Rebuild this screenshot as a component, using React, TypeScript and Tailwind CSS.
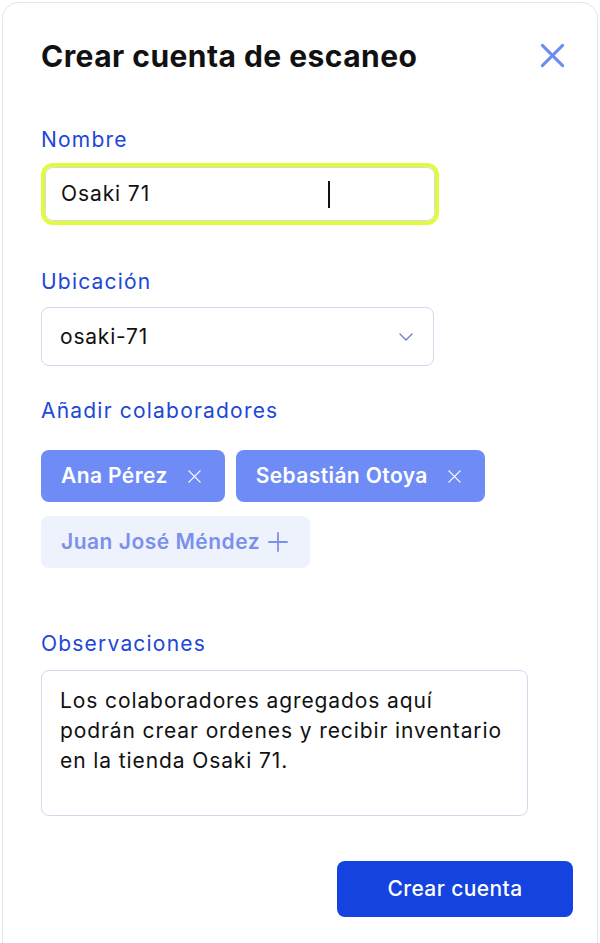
import React from "react";

function CloseIcon({ className }: { className?: string }) {
  return (
    <svg viewBox="0 0 24 24" className={className} fill="none" stroke="currentColor" strokeLinecap="round">
      <path d="M3 3L21 21M21 3L3 21" />
    </svg>
  );
}

function Chip({ name }: { name: string }) {
  return (
    <div className="flex h-[52px] items-center gap-[19px] rounded-[8px] bg-[#6f8cf6] pl-[20px] pr-[23px] text-[21px] font-semibold tracking-[0.4px] text-white">
      <span>{name}</span>
      <CloseIcon className="h-[15px] w-[15px] stroke-[2]" />
    </div>
  );
}

export default function App() {
  return (
    <div className="min-h-[943px] overflow-hidden bg-white p-[2px] font-['Inter','Liberation_Sans',sans-serif]">
      <div className="h-[960px] rounded-[16px] border border-[#e3e7f2] pl-[38px] pr-[24px] pt-[36px]">
        {/* encabezado */}
        <div className="flex items-start justify-between">
          <h1 className="text-[30px] font-bold leading-[34px] tracking-[0.45px] text-[#111]">
            Crear cuenta de escaneo
          </h1>
          <CloseIcon className="mr-[7px] mt-[3px] h-[27px] w-[27px] stroke-[2.7] text-[#6e8bef]" />
        </div>

        {/* nombre */}
        <label className="mt-[55px] block text-[21px] leading-[24px] tracking-[1.2px] text-[#2047d8]">Nombre</label>
        <div className="mt-[11px] h-[62px] w-[398px] rounded-[12px] border-4 border-[#e2fa3a]">
          <div className="flex h-full items-center rounded-[8px] border border-[#d4d9e6] pl-[15px] text-[21px] tracking-[0.9px] text-[#111]">
            <span>Osaki 71</span>
            <span className="ml-[178px] h-[27px] w-[2px] bg-[#111]" />
          </div>
        </div>

        {/* ubicación */}
        <label className="mt-[45px] block text-[21px] leading-[24px] tracking-[1.2px] text-[#2047d8]">Ubicación</label>
        <div className="mt-[13px] flex h-[59px] w-[393px] items-center justify-between rounded-[8px] border border-[#d3d8ee] pl-[18px] pr-[20px] text-[21px] tracking-[0.8px] text-[#111]">
          <span>osaki-71</span>
          <svg viewBox="0 0 14 8" className="h-[8px] w-[14px]" fill="none" stroke="#6a7bd0" strokeWidth="1.4" strokeLinecap="round" strokeLinejoin="round">
            <path d="M1 1L7 7L13 1" />
          </svg>
        </div>

        {/* colaboradores */}
        <label className="mt-[33px] block text-[21px] leading-[24px] tracking-[1.2px] text-[#2047d8]">Añadir colaboradores</label>
        <div className="mt-[27px] flex flex-wrap gap-x-[11px] gap-y-[14px]">
          <Chip name="Ana Pérez" />
          <Chip name="Sebastián Otoya" />
          <div className="flex h-[52px] items-center gap-[8px] rounded-[8px] bg-[#eef2fd] pl-[20px] pr-[22px] text-[21px] font-semibold tracking-[0.5px] text-[#7b90ea]">
            <span>Juan José Méndez</span>
            <svg viewBox="0 0 20 20" className="h-[20px] w-[20px]" fill="none" stroke="currentColor" strokeWidth="1.8" strokeLinecap="round">
              <path d="M10 1V19M1 10H19" />
            </svg>
          </div>
        </div>

        {/* observaciones */}
        <label className="mt-[64px] block text-[21px] leading-[24px] tracking-[1.2px] text-[#2047d8]">Observaciones</label>
        <div className="mt-[14px] h-[146px] w-[487px] rounded-[8px] border border-[#d3d8ee] pl-[18px] pr-[12px] pt-[15px] text-[21px] leading-[30px] tracking-[0.9px] text-[#111]">
          Los colaboradores agregados aquí
          <br />
          podrán crear ordenes y recibir inventario
          <br />
          en la tienda Osaki 71.
        </div>

        <div className="mt-[45px] flex justify-end">
          <button className="h-[56px] w-[236px] rounded-[8px] bg-[#1443e0] text-[21px] font-medium tracking-[0.4px] text-white">
            Crear cuenta
          </button>
        </div>
      </div>
    </div>
  );
}
